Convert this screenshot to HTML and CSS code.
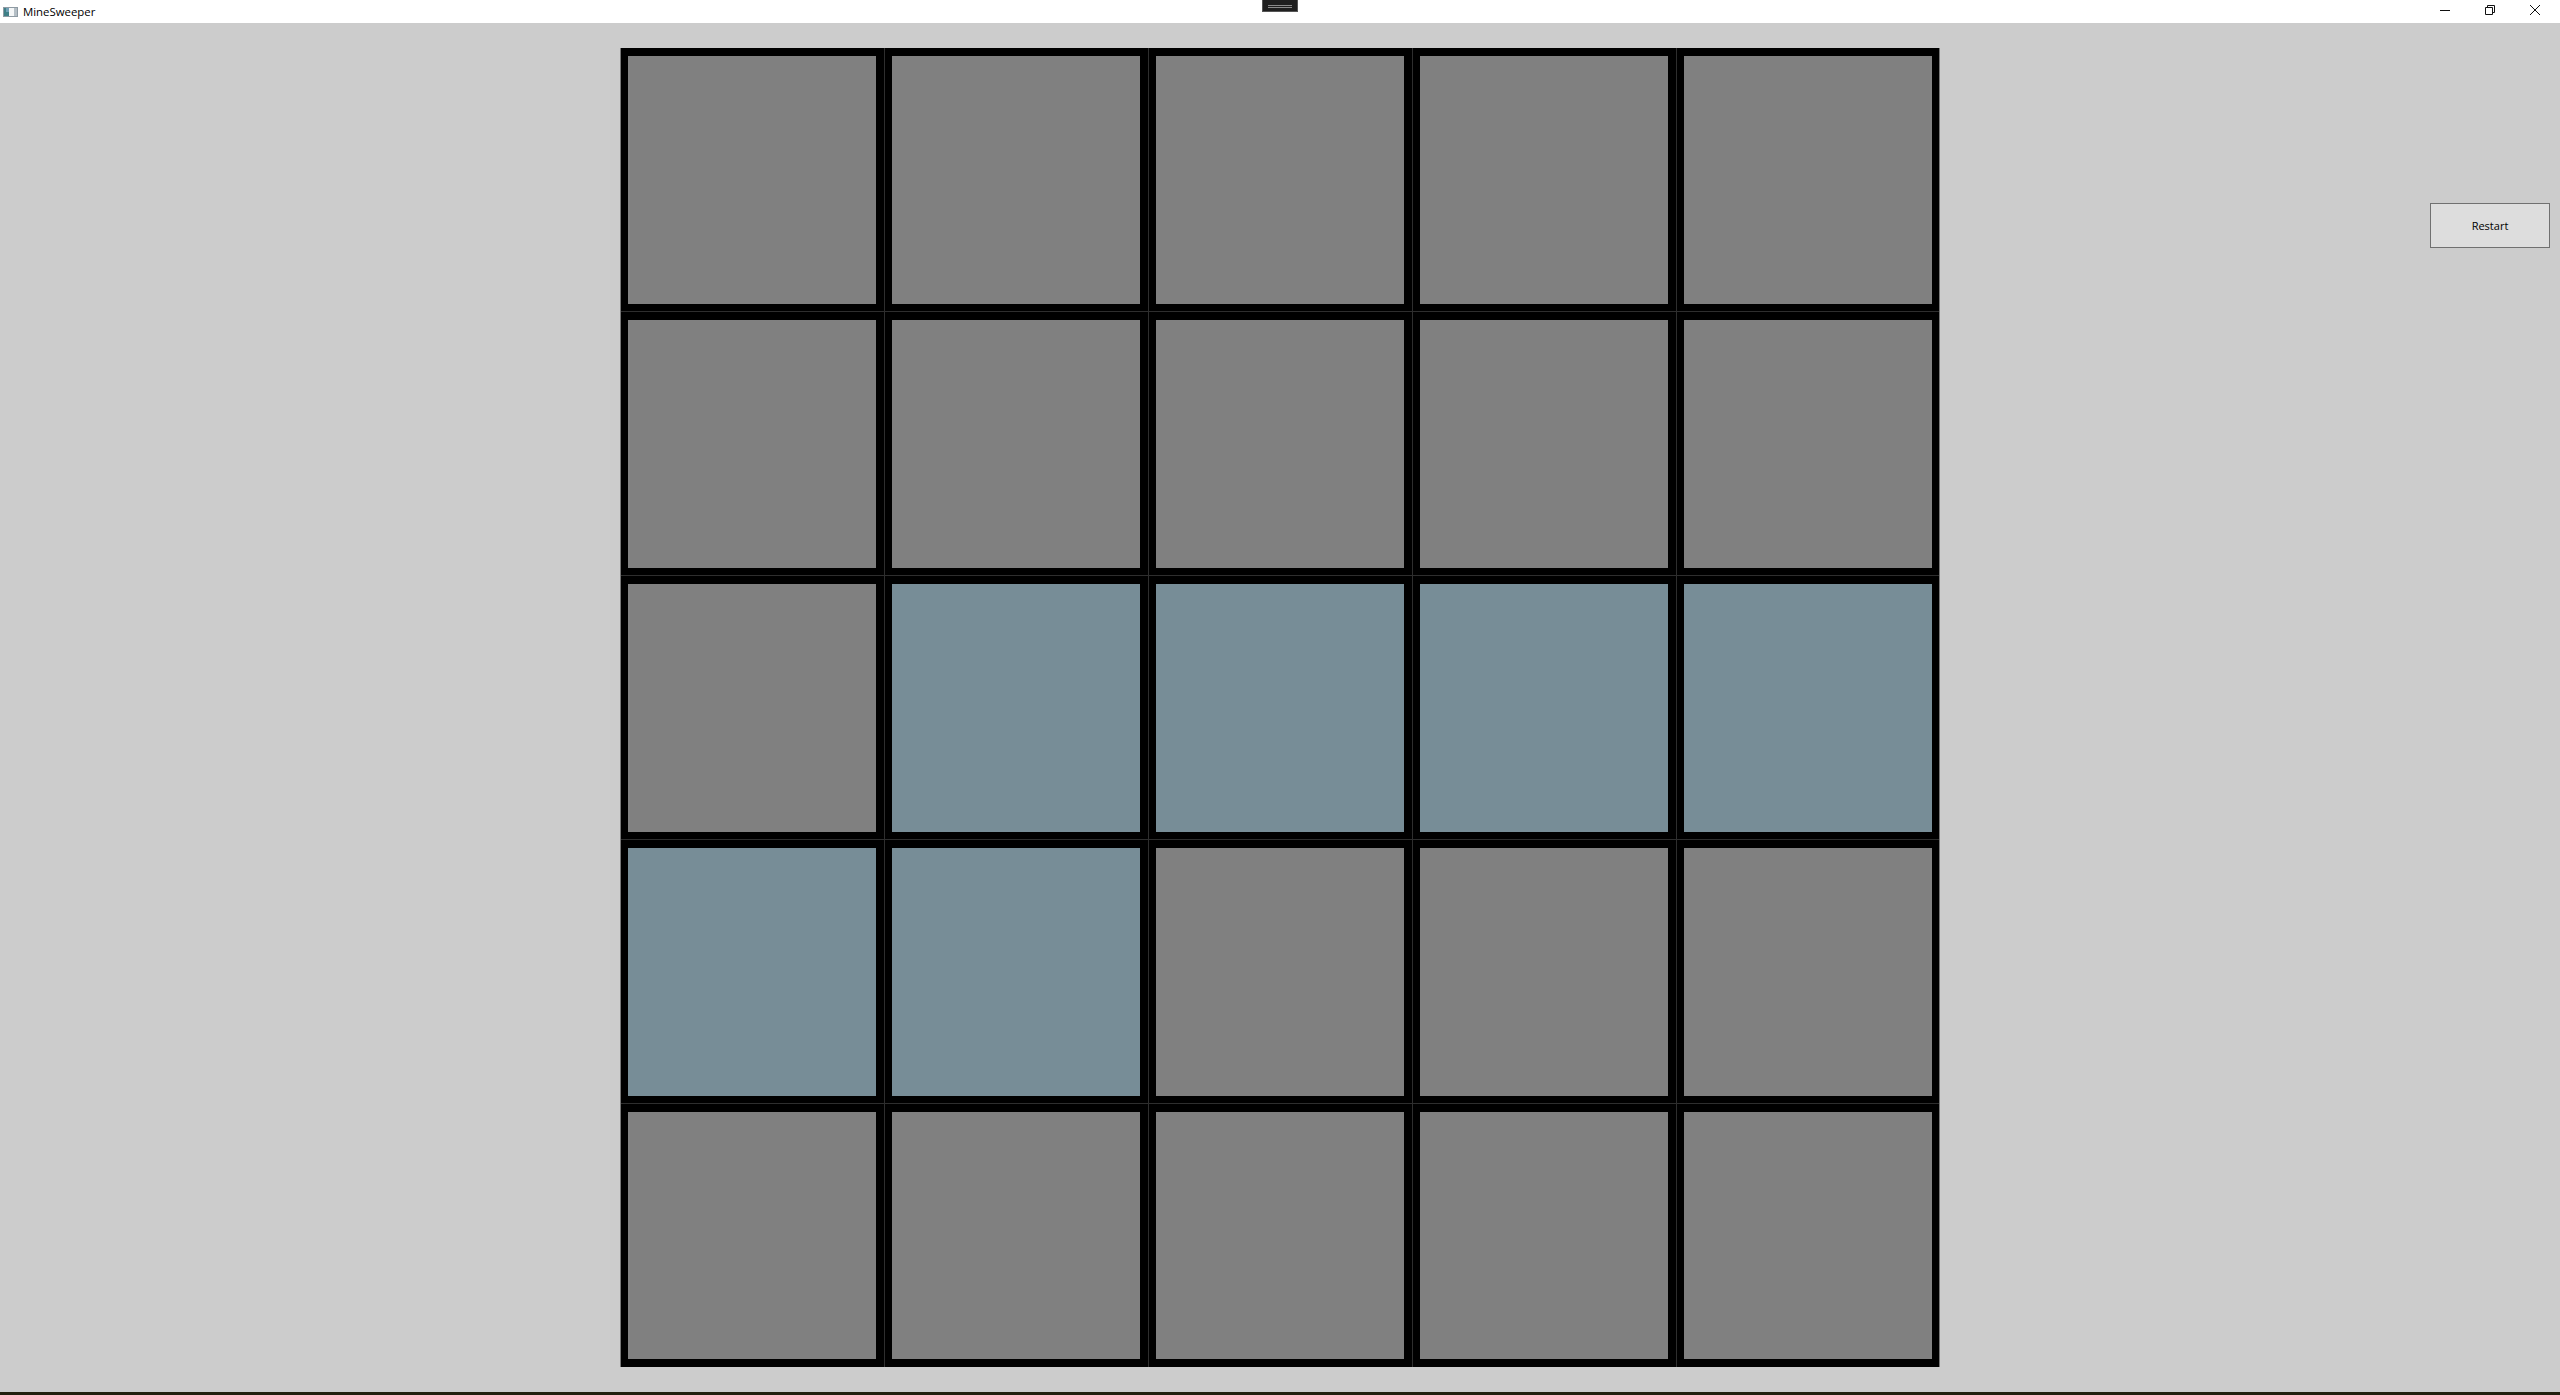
FILE: index.html
```html
<!DOCTYPE html>
<html lang="en">
<head>
  <meta charset="UTF-8">
  <title>MineSweeper</title>
  <link rel="stylesheet" href="styles.css">
</head>
<body>
  <div id="window">
    <div id="titlebar">
      <div id="title-left">
        <svg class="app-icon" width="15" height="10" viewBox="0 0 15 10">
          <rect x="0" y="0" width="15" height="10" fill="#8e9aa3"/>
          <rect x="1" y="1" width="5" height="8" fill="#3f7f86"/>
          <rect x="3" y="1" width="3" height="4" fill="#6f9fb5"/>
          <rect x="6" y="1" width="5" height="8" fill="#f4f6f7"/>
          <rect x="11" y="1" width="3" height="8" fill="#b4bec5"/>
        </svg>
        <span id="title-text">MineSweeper</span>
      </div>
      <div id="drag-handle"><div class="handle-line"></div></div>
      <div id="window-buttons">
        <svg width="12" height="12" viewBox="0 0 12 12"><path d="M1 6.5h10" stroke="#111" fill="none"/></svg>
        <svg width="12" height="12" viewBox="0 0 12 12"><path d="M1.5 3.5h7v7h-7zM3.5 3.5v-2h7v7h-2" stroke="#111" fill="none"/></svg>
        <svg width="12" height="12" viewBox="0 0 12 12"><path d="M1 1l10 10M11 1L1 11" stroke="#111" fill="none"/></svg>
      </div>
    </div>
    <div id="content">
      <div id="board">
        <div class="cell"></div><div class="cell"></div><div class="cell"></div><div class="cell"></div><div class="cell"></div>
        <div class="cell"></div><div class="cell"></div><div class="cell"></div><div class="cell"></div><div class="cell"></div>
        <div class="cell"></div><div class="cell open"></div><div class="cell open"></div><div class="cell open"></div><div class="cell open"></div>
        <div class="cell open"></div><div class="cell open"></div><div class="cell"></div><div class="cell"></div><div class="cell"></div>
        <div class="cell"></div><div class="cell"></div><div class="cell"></div><div class="cell"></div><div class="cell"></div>
      </div>
      <button id="restart-button">Restart</button>
    </div>
    <div id="taskbar-edge"></div>
  </div>
</body>
</html>
```

FILE: styles.css
```css
body, html {
  margin: 0;
  padding: 0;
  width: 100%;
  height: 100%;
  overflow: hidden;
  font-family: 'Open Sans', 'Liberation Sans', sans-serif;
  background: #cccccc;
}

#window {
  width: 100%;
  height: 100%;
  display: flex;
  flex-direction: column;
}

#titlebar {
  height: 23px;
  flex: none;
  background: #ffffff;
  display: grid;
  grid-template-columns: 1fr 36px 1fr;
}

#title-left {
  display: flex;
  align-items: center;
  gap: 5px;
  padding-left: 3px;
}

#title-text {
  font-size: 11.4px;
  color: #000000;
}

#drag-handle {
  height: 12px;
  box-sizing: border-box;
  background: #1f1f1f;
  border: 1px solid #555555;
  border-top: none;
  display: flex;
  align-items: center;
  justify-content: center;
}

.handle-line {
  width: 24px;
  height: 3px;
  margin-top: 2px;
  border-top: 1px solid #8a8a8a;
  border-bottom: 1px solid #8a8a8a;
  box-sizing: border-box;
}

#window-buttons {
  justify-self: end;
  display: flex;
  gap: 33px;
  padding: 4px 19px 0 0;
  height: 12px;
}

#content {
  flex: 1;
  min-height: 0;
  display: flex;
  justify-content: center;
  align-items: flex-start;
  padding-top: 25px;
  position: relative;
}

#board {
  display: grid;
  grid-template-columns: repeat(4, 263px) 262px;
  grid-template-rows: repeat(5, 263px);
  gap: 1px;
  background: #2e2e2e;
  border-left: 1px solid #777777;
  border-right: 1px solid #777777;
}

.cell {
  background: #808080;
  border: solid #000000;
  border-width: 8px 8px 7px 7px;
}

.cell:nth-child(5n) {
  border-right-width: 7px;
}

.cell:nth-child(n+21) {
  border-bottom-width: 8px;
}

.open {
  background: #778d97;
}

#restart-button {
  position: absolute;
  top: 180px;
  right: 10px;
  width: 120px;
  height: 45px;
  background: #dddddd;
  border: 1px solid #707070;
  font-family: 'Open Sans', 'Liberation Sans', sans-serif;
  font-size: 11px;
  color: #000000;
  padding: 0;
}

#taskbar-edge {
  height: 3px;
  flex: none;
  background: #23210f;
}
```
